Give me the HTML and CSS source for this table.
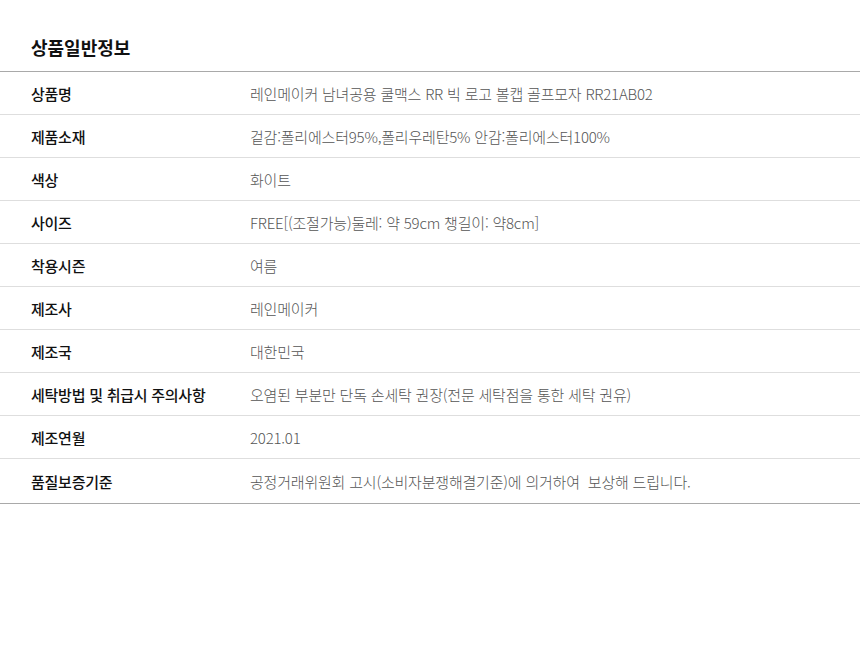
FILE: index.html
```html
<!DOCTYPE html>
<html lang="ko">
<head>
<meta charset="utf-8">
<link rel="stylesheet" href="styles.css">
</head>
<body>
<div class="info">
  <h2 class="title">상품일반정보</h2>
  <div class="table">
    <div class="row"><div class="label">상품명</div><div class="value">레인메이커 남녀공용 쿨맥스 RR 빅 로고 볼캡 골프모자 RR21AB02</div></div>
    <div class="row"><div class="label">제품소재</div><div class="value">겉감:폴리에스터95%,폴리우레탄5% 안감:폴리에스터100%</div></div>
    <div class="row"><div class="label">색상</div><div class="value">화이트</div></div>
    <div class="row"><div class="label">사이즈</div><div class="value">FREE[(조절가능)둘레: 약 59cm 챙길이: 약8cm]</div></div>
    <div class="row"><div class="label">착용시즌</div><div class="value">여름</div></div>
    <div class="row"><div class="label">제조사</div><div class="value">레인메이커</div></div>
    <div class="row"><div class="label">제조국</div><div class="value">대한민국</div></div>
    <div class="row"><div class="label">세탁방법 및 취급시 주의사항</div><div class="value">오염된 부분만 단독 손세탁 권장(전문 세탁점을 통한 세탁 권유)</div></div>
    <div class="row"><div class="label">제조연월</div><div class="value">2021.01</div></div>
    <div class="row last"><div class="label">품질보증기준</div><div class="value">공정거래위원회 고시(소비자분쟁해결기준)에 의거하여&nbsp; 보상해 드립니다.</div></div>
  </div>
</div>
</body>
</html>
```
FILE: styles.css
```css
html, body {
  margin: 0;
  padding: 0;
  background: #fff;
}
body {
  font-family: "Noto Sans CJK KR", "Noto Sans", sans-serif;
  color: #222;
}
.info {
  width: 860px;
}
.title {
  margin: 0;
  padding: 34px 0 11px 31px;
  font-size: 18px;
  line-height: 26px;
  font-weight: 700;
  color: #111;
}
.table {
  border-top: 1px solid #a9a9a9;
  border-bottom: 1px solid #a9a9a9;
}
.row {
  display: flex;
  align-items: center;
  height: 42px;
  border-bottom: 1px solid #dedede;
}
.row.last {
  height: 44px;
  border-bottom: none;
}
.label {
  width: 219px;
  flex-shrink: 0;
  padding-left: 31px;
  font-size: 15px;
  letter-spacing: -0.25px;
  font-weight: 500;
  color: #111;
}
.value {
  font-size: 15px;
  letter-spacing: -0.2px;
  font-weight: 300;
  color: #555;
}
```
